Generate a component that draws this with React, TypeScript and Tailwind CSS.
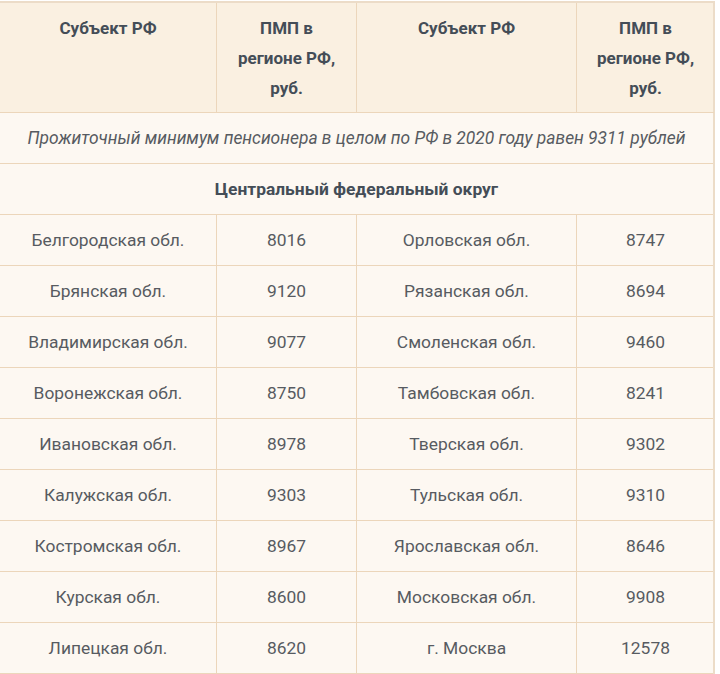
const rows: [string, string, string, string][] = [
  ["Белгородская обл.", "8016", "Орловская обл.", "8747"],
  ["Брянская обл.", "9120", "Рязанская обл.", "8694"],
  ["Владимирская обл.", "9077", "Смоленская обл.", "9460"],
  ["Воронежская обл.", "8750", "Тамбовская обл.", "8241"],
  ["Ивановская обл.", "8978", "Тверская обл.", "9302"],
  ["Калужская обл.", "9303", "Тульская обл.", "9310"],
  ["Костромская обл.", "8967", "Ярославская обл.", "8646"],
  ["Курская обл.", "8600", "Московская обл.", "9908"],
  ["Липецкая обл.", "8620", "г. Москва", "12578"],
];

const cols = "grid grid-cols-[217px_140px_220px_137px]";

export default function App() {
  return (
    <div className="h-[674px] w-[720px] overflow-hidden bg-white pt-[1px] font-['Roboto',sans-serif] text-[17.4px]">
      <div className="w-[715px] border-t-2 border-r-2 border-[#ecdcc8]">
        <div className={`${cols} bg-[#faf0e1] text-[17px] font-bold leading-[30px] text-[#444d57]`}>
          <div className="border-r border-b border-[#ecd6bb] px-2 pt-[10px] pb-[9px] text-center">Субъект РФ</div>
          <div className="border-r border-b border-[#ecd6bb] px-2 pt-[10px] pb-[9px] text-center">
            ПМП в<br />регионе РФ,<br />руб.
          </div>
          <div className="border-r border-b border-[#ecd6bb] px-2 pt-[10px] pb-[9px] text-center">Субъект РФ</div>
          <div className="border-b border-[#ecd6bb] px-2 pt-[10px] pb-[9px] text-center">
            ПМП в<br />регионе РФ,<br />руб.
          </div>
        </div>
        <div className="bg-[#fdf8f2] text-[#575b61]">
          <div className="flex h-[51px] items-center justify-center border-b border-[#ecd6bb] italic">
            Прожиточный минимум пенсионера в целом по РФ в 2020 году равен 9311 рублей
          </div>
          <div className="flex h-[51px] items-center justify-center border-b border-[#ecd6bb] text-[17.4px] font-bold text-[#444d57]">
            Центральный федеральный округ
          </div>
          {rows.map((r) => (
            <div key={r[0]} className={`${cols} h-[51px] border-b border-[#ecd6bb]`}>
              <div className="flex items-center justify-center border-r border-[#ecd6bb]">{r[0]}</div>
              <div className="flex items-center justify-center border-r border-[#ecd6bb]">{r[1]}</div>
              <div className="flex items-center justify-center border-r border-[#ecd6bb]">{r[2]}</div>
              <div className="flex items-center justify-center">{r[3]}</div>
            </div>
          ))}
        </div>
      </div>
    </div>
  );
}
